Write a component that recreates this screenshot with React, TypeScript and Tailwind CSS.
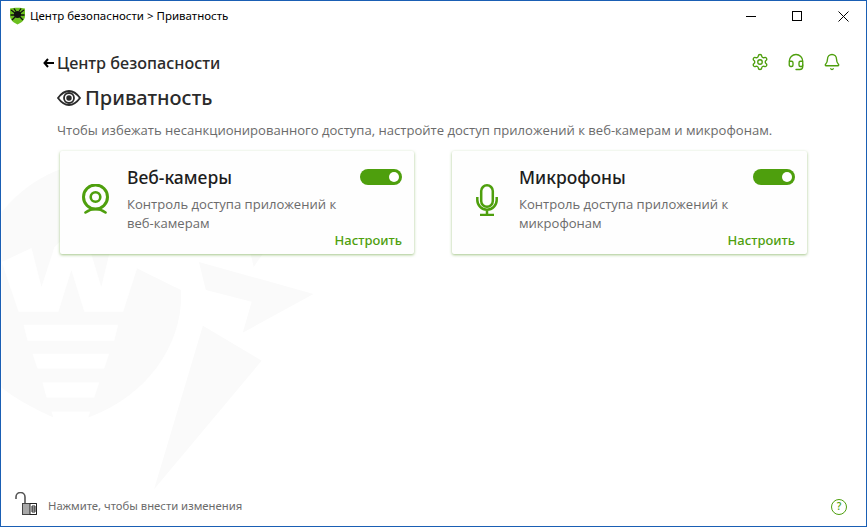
import { Bell, Headset, Settings } from "lucide-react"

const uiFont = "font-['Open_Sans','Noto_Sans',sans-serif]"
const headFont = "font-['Noto_Sans',sans-serif] font-medium"

function Watermark() {
  return (
    <svg className="absolute left-0 top-0 h-full w-full" viewBox="0 0 867 527" fill="#fafafa">
      <path d="M0 212C18 190 40 175 62 168L130 168L133 267L180 290C183 340 150 395 87 418L89 412L50 412L52 418C30 408 12 398 0 388Z" />
      <path fill="#fff" d="M0 262L17 312L57 312L70 270L83 312L122 312L138 262L133 254L108 254L100 287L90 254L60 254L60 240L53 247L40 287L30 248Z" />
      <path fill="#fff" d="M22 325L117 325L113 341L26 341ZM31 354L108 354L103 369L36 369ZM41 383L98 383L93 398L45 398Z" />
      <path d="M198 262L313 294L242 333L251 302L205 290Z" />
      <path d="M202 326L261 361L153 490Z" />
      <path d="M250 254L262 254L253 267Z" />
    </svg>
  )
}

function CameraIcon() {
  return (
    <svg width="27" height="30" viewBox="0 0 27 30" fill="none" stroke="#4e9f0d">
      <path d="M3.500 28.500C7 26 10 25 13.500 25S20 26 23.500 28.500" strokeWidth="2.600" strokeLinecap="round" />
      <circle cx="13.500" cy="13" r="12" strokeWidth="3" fill="#fefefe" />
      <circle cx="13.500" cy="13" r="4.800" strokeWidth="2.600" />
    </svg>
  )
}

function MicIcon() {
  return (
    <svg width="22" height="32" viewBox="0 0 22 32" fill="none" stroke="#4e9f0d" strokeWidth="2.500">
      <rect x="5.200" y="1.300" width="11.600" height="21.500" rx="5.800" />
      <path d="M1.300 13v3a9.700 9.700 0 0 0 19.400 0v-3M11 26v5M4 31h14" />
    </svg>
  )
}

function CardToggle() {
  return (
    <div className="flex h-4 w-[42px] items-center justify-end rounded-full bg-[#4e9f0d] pr-[3px]">
      <div className="size-[10px] rounded-full bg-white" />
    </div>
  )
}

function PrivacyCard({ title, line, icon, className }: { title: string; line: string; icon: React.ReactNode; className: string }) {
  return (
    <div className={`relative h-[103px] rounded-[2px] bg-[#fefefe] shadow-[0_1px_3px_rgba(90,150,40,0.55)] ${className}`}>
      <div className="flex h-full">
        <div className="flex w-[67px] shrink-0 justify-center pl-[3px] pt-[33px]">{icon}</div>
        <div className="flex-1 pr-3 pt-[14px]">
          <div className="flex items-center justify-between">
            <span className={`text-[17.500px] leading-6 text-[#1d1d1d] ${headFont}`}>{title}</span>
            <CardToggle />
          </div>
          <div className="mt-[6px] text-[13.050px] leading-[19px] text-[#6b6b6b]">
            Контроль доступа приложений к
            <br />
            {line}
          </div>
        </div>
      </div>
      <a className={`absolute bottom-[4px] right-3 text-[13px] leading-5 text-[#4e9f0d] ${headFont}`}>Настроить</a>
    </div>
  )
}

export default function App() {
  return (
    <div className={`relative flex h-[527px] w-[867px] flex-col overflow-hidden border border-[#1a5fb4] bg-white ${uiFont}`}>
      <Watermark />
      <div className="relative flex h-[30px] shrink-0 items-center pl-2">
        <svg width="17" height="18" viewBox="0 0 17 18">
          <path d="M1 1.500C5 .5 12 .5 16 1.500V9c0 4-4 7-7.500 8.500C5 16 1 13 1 9Z" fill="#6cc01f" />
          <circle cx="8.500" cy="7.500" r="3.600" fill="#111" />
          <path d="M2 3l4 3M15 3l-4 3M1.500 8h4M15.500 8h-4M3 13l3-3M14 13l-3-3M5 1.500l2 3M12 1.500l-2 3" stroke="#111" strokeWidth="1.300" />
        </svg>
        <span className="ml-[4px] font-['Noto_Sans',sans-serif] text-[11.500px] text-black">Центр безопасности &gt; Приватность</span>
        <div className="ml-auto flex items-center">
          <div className="flex w-[46px] justify-center">
            <div className="h-px w-[10px] bg-black" />
          </div>
          <div className="flex w-[46px] justify-center">
            <div className="size-[10px] border border-black" />
          </div>
          <div className="flex w-[46px] justify-center">
            <svg width="11" height="11" viewBox="0 0 11 11" stroke="black"><path d="M.5.5l10 10M10.500.5l-10 10" /></svg>
          </div>
        </div>
      </div>

      <div className="relative flex-1 pl-[42px] pr-[25px] pt-5">
        <div className="flex h-6 items-center justify-between">
          <div className="flex items-center gap-[3px]">
            <svg width="11" height="10" viewBox="0 0 11 10" fill="none" stroke="black" strokeWidth="2"><path d="M5 1L1.500 5 5 9M2 5h9" /></svg>
            <span className={`text-[16.200px] text-[#2b2b2b] ${headFont}`}>Центр безопасности</span>
          </div>
          <div className="mb-[2px] flex items-center gap-[18px] text-[#4e9f0d]">
            <Settings size={18} strokeWidth={1.800} />
            <Headset size={18} strokeWidth={1.800} />
            <Bell size={18} strokeWidth={1.800} />
          </div>
        </div>

        <div className="mt-[9px] flex h-7 items-center gap-1 pl-[14px]">
          <svg width="24" height="16" viewBox="0 0 24 16" fill="none" stroke="#2b2b2b" strokeWidth="1.800">
            <path d="M1 8C5 2.500 8.500 1 12 1s7 1.500 11 7c-4 5.500-7.500 7-11 7S5 13.500 1 8Z" />
            <circle cx="12" cy="8" r="5" />
            <circle cx="12" cy="8" r="1.800" fill="#2b2b2b" />
          </svg>
          <span className={`text-xl text-[#2b2b2b] ${headFont}`}>Приватность</span>
        </div>

        <p className="mt-[8px] pl-[14px] text-[13.070px] leading-5 text-[#6b6b6b]">
          Чтобы избежать несанкционированного доступа, настройте доступ приложений к веб-камерам и микрофонам.
        </p>

        <div className="mt-[11px] flex gap-[38px] pl-[17px]">
          <PrivacyCard className="w-[354px]" title="Веб-камеры" line="веб-камерам" icon={<CameraIcon />} />
          <PrivacyCard className="w-[355px]" title="Микрофоны" line="микрофонам" icon={<MicIcon />} />
        </div>
      </div>

      <div className="relative flex h-[39px] shrink-0 items-center justify-between pl-[14px] pr-[19px]">
        <div className="flex items-center gap-[9px]">
          <svg className="mb-[6px]" width="24" height="24" viewBox="0 0 24 24" fill="none">
            <path d="M1 7V5a4.500 4.500 0 0 1 9 0v6" stroke="#555" strokeWidth="1.600" />
            <rect x="7.500" y="11.500" width="14" height="11" fill="#a8a8a8" stroke="#444" />
            <path d="M15 11.500h6.500v11H15zM17 14h3v6h-3zM17 16h3M17 18h3" stroke="#222" fill="#fff" />
          </svg>
          <span className="font-['Noto_Sans',sans-serif] text-[11.300px] text-[#6b6b6b]">Нажмите, чтобы внести изменения</span>
        </div>
        <div className="flex size-4 items-center justify-center rounded-full border border-[#4e9f0d] text-[10px] font-semibold text-[#4e9f0d]">?</div>
      </div>
    </div>
  )
}
